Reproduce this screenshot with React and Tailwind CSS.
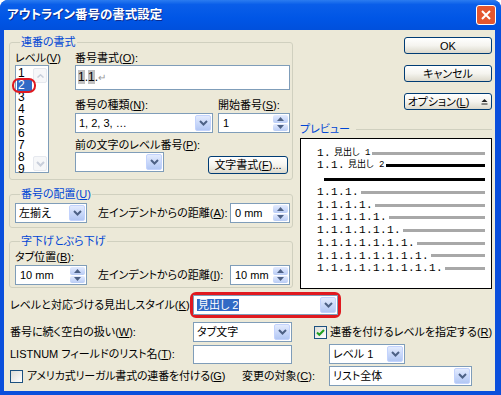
import React from "react";

// small XP-style parts
const Chevron = ({ color = "#4d6185" }) => (
  <svg width="9" height="6" viewBox="0 0 9 6">
    <path d="M1 1l3.5 3.5L8 1" fill="none" stroke={color} strokeWidth="2" />
  </svg>
);

const Tri = ({ up }) => (
  <svg width="7" height="4" viewBox="0 0 7 4">
    <path d={up ? "M0 4L3.5 0L7 4Z" : "M0 0L3.5 4L7 0Z"} fill="#4d6185" />
  </svg>
);

function DropBtn() {
  return (
    <div className="flex h-full w-[16px] shrink-0 items-center justify-center rounded-[2px] border border-[#c3d3fd] bg-gradient-to-b from-[#e3ebfe] to-[#b2c7f4]">
      <Chevron />
    </div>
  );
}

function Select({ className, children }) {
  return (
    <div className={`flex h-[20px] items-center border border-[#7f9db9] bg-white p-[1px] ${className}`}>
      <div className="flex-1 overflow-hidden pl-[2px]">{children}</div>
      <DropBtn />
    </div>
  );
}

function Spin({ className, value }) {
  return (
    <div className={`flex h-[20px] items-center border border-[#7f9db9] bg-white p-[1px] ${className}`}>
      <div className="flex-1 pl-[3px]">{value}</div>
      <div className="flex h-full w-[15px] flex-col gap-[1px]">
        <div className="flex flex-1 items-center justify-center rounded-[2px] bg-gradient-to-b from-[#e3ebfe] to-[#b9ccf5]">
          <Tri up />
        </div>
        <div className="flex flex-1 items-center justify-center rounded-[2px] bg-gradient-to-b from-[#e3ebfe] to-[#b9ccf5]">
          <Tri />
        </div>
      </div>
    </div>
  );
}

function XpButton({ className, children }) {
  return (
    <div className={`flex h-[17px] items-center justify-center rounded-[3px] border border-[#003c74] bg-gradient-to-b from-white via-[#f5f4ef] to-[#dcd9cc] ${className}`}>
      {children}
    </div>
  );
}

function Group({ title, className, children }) {
  return (
    <fieldset className={`rounded-[3px] border border-[#d0d0bf] ${className}`}>
      <legend className="ml-[5px] px-[1px] text-[#0046d5]">{title}</legend>
      {children}
    </fieldset>
  );
}

function Check({ checked }) {
  return (
    <div className="flex h-[13px] w-[13px] shrink-0 items-center justify-center border border-[#1c5180] bg-gradient-to-br from-[#dcdcd7] to-white">
      {checked ? (
        <svg width="9" height="9" viewBox="0 0 9 9">
          <path d="M1 4.5l2.3 2.3L8 2" fill="none" stroke="#21a121" strokeWidth="2" />
        </svg>
      ) : null}
    </div>
  );
}

const levels = ["1", "2", "3", "4", "5", "6", "7", "8", "9"];
const deep = [3, 4, 5, 6, 7, 8, 9];

export default function App() {
  return (
    <div className="flex h-[395px] w-[501px] flex-col overflow-hidden whitespace-nowrap rounded-t-[8px] bg-[#0a4fdc] font-['Liberation_Sans','Noto_Sans_CJK_JP',sans-serif] text-[11px] leading-[14px] text-black [font-feature-settings:'palt']">
      {/* title bar */}
      <div className="flex h-[30px] shrink-0 items-center justify-between bg-[linear-gradient(#2b7cf0,#0a5ee9_15%,#0056e6_60%,#0050dc)] pl-[7px] pr-[5px]">
        <span className="text-[12.5px] font-bold text-white [text-shadow:1px_1px_#0a2a8e]">アウトライン番号の書式設定</span>
        <div className="flex h-[20px] w-[20px] items-center justify-center rounded-[3px] border border-white bg-[#e4562f]">
          <svg width="10" height="10" viewBox="0 0 10 10">
            <path d="M1 1l8 8M9 1l-8 8" stroke="white" strokeWidth="2" />
          </svg>
        </div>
      </div>

      {/* body */}
      <div className="mb-[4px] ml-[4px] mr-[6px] flex flex-1 flex-col bg-[#ece9d8] pl-[5px]">
        <div className="flex">
          {/* left column */}
          <div className="flex w-[284px] flex-col pt-[5px]">
            <Group title="連番の書式" className="pb-[5px] pl-[5px] pr-[2px]">
              <div className="flex pt-[2px]">
                <div className="flex w-[34px] flex-col">
                  <span>レベル(<u>V</u>)</span>
                  <div className="relative h-[108px] border border-[#7f9db9] bg-white">
                    <div className="flex flex-col pl-[1px] pt-[1px] text-[12px] leading-[12px]">
                      {levels.map((l) =>
                        l === "2" ? (
                          <span key={l} className="w-[15px] bg-[#316ac5] pl-[1px] text-white">{l}</span>
                        ) : (
                          <span key={l} className="pl-[1px]">{l}</span>
                        )
                      )}
                    </div>
                    <div className="absolute right-[1px] top-[2px] flex h-[15px] w-[14px] items-center justify-center rounded-[2px] border border-[#e6e9ef] bg-[#f6f7f9]">
                      <svg width="7" height="4" viewBox="0 0 7 4"><path d="M0.5 3.5L3.5 0.8L6.5 3.5" fill="none" stroke="#c9cfdb" strokeWidth="1.5" /></svg>
                    </div>
                    <div className="absolute bottom-[1px] right-[1px] flex h-[15px] w-[14px] items-center justify-center rounded-[2px] border border-[#e6e9ef] bg-[#f6f7f9]">
                      <Chevron color="#c9cfdb" />
                    </div>
                    <div className="absolute left-[-4px] top-[12px] h-[15px] w-[24px] rounded-[7px] border-[2.5px] border-[#e0191f]" />
                  </div>
                </div>
                <div className="ml-[26px] flex w-[215px] flex-col">
                  <span>番号書式(<u>O</u>):</span>
                  <div className="h-[25px] border border-[#7f9db9] bg-white pl-[2px] pt-[4px] text-[12px]">
                    <span className="bg-[#c0c0c0]">1</span>.<span className="bg-[#c0c0c0]">1</span>.<span className="text-[10px] text-[#999]">↵</span>
                  </div>
                  <div className="mt-[8px] flex gap-[5px]">
                    <div className="flex w-[138px] flex-col gap-[1px]">
                      <span>番号の種類(<u>N</u>):</span>
                      <Select className="w-[138px]">1, 2, 3, …</Select>
                    </div>
                    <div className="flex w-[72px] flex-col gap-[1px]">
                      <span>開始番号(<u>S</u>):</span>
                      <Spin className="w-[72px]" value="1" />
                    </div>
                  </div>
                  <span className="mt-[5px]">前の文字のレベル番号(<u>P</u>):</span>
                  <div className="flex items-start justify-between pr-[2px]">
                    <Select className="w-[89px]" />
                    <XpButton className="mt-[4px] h-[18px] w-[80px]">文字書式(<u>F</u>)...</XpButton>
                  </div>
                </div>
              </div>
            </Group>

            <Group title={<>番号の配置(<u>U</u>)</>} className="mt-[7px] pb-[4px] pl-[5px] pr-[2px]">
              <div className="flex items-center pt-[2px]">
                <Select className="w-[72px]">左揃え</Select>
                <span className="ml-[11px] flex-1">左インデントからの距離(<u>A</u>):</span>
                <Spin className="w-[60px]" value="0 mm" />
              </div>
            </Group>

            <Group title="字下げとぶら下げ" className="mt-[6px] pb-[2px] pl-[5px] pr-[2px]">
              <div className="flex flex-col pt-[2px]">
                <span>タブ位置(<u>B</u>):</span>
                <div className="mt-[1px] flex items-center">
                  <Spin className="w-[72px]" value="10 mm" />
                  <span className="ml-[11px] flex-1">左インデントからの距離(<u>I</u>):</span>
                  <Spin className="w-[60px]" value="10 mm" />
                </div>
              </div>
            </Group>
          </div>

          {/* right column */}
          <div className="flex flex-1 flex-col pl-[7px] pt-[7px]">
            <div className="flex flex-col items-end gap-[11px] pr-[3px]">
              <XpButton className="w-[88px]">OK</XpButton>
              <XpButton className="w-[88px]">キャンセル</XpButton>
              <XpButton className="w-[88px] gap-[12px]">
                <span>オプション(<u>L</u>)</span>
                <svg width="7" height="7" viewBox="0 0 7 7"><path d="M0.5 4L3.5 1L6.5 4Z" fill="#222" /><path d="M0.5 6h6" stroke="#222" strokeWidth="1" /></svg>
              </XpButton>
            </div>
            <div className="mt-[12px] flex items-center gap-[6px] pr-[3px]">
              <span className="text-[#0046d5]">プレビュー</span>
              <div className="h-px flex-1 bg-[#d0d0bf]" />
            </div>
            <div className="mt-[2px] mr-[3px] flex h-[151px] flex-col border border-black bg-white pl-[16px] pr-[6px] pt-[8px] font-['Liberation_Mono','Noto_Sans_CJK_JP',monospace] text-[11px] leading-[12px] tracking-[0.4px]">
              <div className="flex items-center">
                <span>1.</span>
                <span className="ml-[3px] text-[9px] tracking-normal">見出し 1</span>
                <div className="ml-[2px] h-[3px] flex-1 bg-[#a8a8a8]" />
              </div>
              <div className="flex items-center">
                <span>1.1.</span>
                <span className="ml-[3px] text-[9px] tracking-normal">見出し 2</span>
                <div className="ml-[2px] h-[3px] flex-1 bg-black" />
              </div>
              <div className="ml-[7px] mt-[7px] h-[3px] bg-black" />
              <div className="mt-[5px] flex flex-col leading-[12.7px]">
                {deep.map((n) => (
                  <div key={n} className="flex items-center">
                    <span>{"1.".repeat(n)}</span>
                    <div className="ml-[2px] h-[3px] flex-1 bg-[#a8a8a8]" />
                  </div>
                ))}
              </div>
            </div>
          </div>
        </div>

        {/* bottom rows */}
        <div className="flex flex-col pl-[1px]">
          <div className="mt-[3px] flex items-center">
            <span className="w-[180px]">レベルと対応づける見出しスタイル(<u>K</u>):</span>
            <div className="rounded-[6px] border-[3px] border-[#e0191f]">
              <Select className="w-[145px]">
                <span className="bg-[#316ac5] px-[1px] text-white">見出し 2</span>
              </Select>
            </div>
          </div>
          <div className="mt-[4px] flex items-center">
            <span className="w-[183px]">番号に続く空白の扱い(<u>W</u>):</span>
            <Select className="w-[99px]">タブ文字</Select>
            <div className="ml-[22px] flex items-center gap-[3px]">
              <Check checked />
              <span>連番を付けるレベルを指定する(<u>R</u>)</span>
            </div>
          </div>
          <div className="mt-[2px] flex items-center">
            <span className="w-[183px]">LISTNUM フィールドのリスト名(<u>T</u>):</span>
            <div className="h-[19px] w-[99px] border border-[#7f9db9] bg-white" />
            <Select className="ml-[37px] w-[76px]">レベル 1</Select>
          </div>
          <div className="mt-[2px] flex items-center">
            <div className="flex w-[232px] items-center gap-[4px]">
              <Check />
              <span className="tracking-[-0.2px]">アメリカ式リーガル書式の連番を付ける(<u>G</u>)</span>
            </div>
            <span className="w-[87px]">変更の対象(<u>C</u>):</span>
            <Select className="w-[143px]">リスト全体</Select>
          </div>
        </div>
      </div>
    </div>
  );
}
